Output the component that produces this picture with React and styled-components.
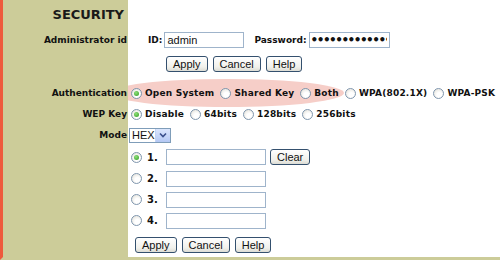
import React from "react";
import styled, { createGlobalStyle } from "styled-components";

const GlobalStyle = createGlobalStyle`
  html, body {
    margin: 0;
    padding: 0;
    background: #ffffff;
  }
  body {
    font-family: "DejaVu Sans", Verdana, sans-serif;
  }
`;

const OLIVE = "#cccc99";

const Page = styled.div`
  width: 497px;
  height: 257px;
  border-left: 3px solid #ee5a3c;
  border-bottom: 3px solid ${OLIVE};
  background: #ffffff;
  display: grid;
  grid-template-columns: 125px 1fr;
  overflow: hidden;
`;

const Label = styled.div`
  position: relative;
  z-index: 2;
  background: ${OLIVE};
  height: ${({ $h }) => $h}px;
  display: flex;
  align-items: center;
  justify-content: flex-end;
  padding-right: 1px;
  font-weight: bold;
  font-size: 9px;
  color: #111;
  white-space: nowrap;
`;

const Title = styled(Label)`
  font-size: 13px;
  padding-right: 4px;
  color: #1a1a1a;
`;

const Field = styled.div`
  position: relative;
  height: ${({ $h }) => $h}px;
  display: flex;
  align-items: ${({ $top }) => ($top ? "flex-start" : "center")};
  padding-left: ${({ $pl }) => $pl || 0}px;
  padding-top: ${({ $pt }) => $pt || 0}px;
  box-sizing: border-box;
  font-size: 9px;
  font-weight: bold;
  color: #111;
  white-space: nowrap;
`;

const Highlight = styled.div`
  position: absolute;
  left: -18px;
  top: -3px;
  width: 234px;
  height: 28px;
  border-radius: 50%;
  background: #f6cec8;
  z-index: 0;
`;

const OptionText = styled.span`
  position: relative;
  z-index: 1;
  letter-spacing: 0.2px;
  margin-right: ${({ $mr }) => $mr || 0}px;
`;

const TextBox = styled.input`
  width: ${({ $w }) => $w}px;
  height: 16px;
  box-sizing: border-box;
  border: 1px solid #9fb4cb;
  padding: 0 2px;
  margin: 0 0 0 ${({ $ml }) => $ml || 0}px;
  font-family: "Liberation Sans", Arial, sans-serif;
  font-size: 11px;
  color: #111;
  outline: none;
  background: #fff;
  &[type="password"] {
    font-family: "DejaVu Sans", sans-serif;
    font-size: 12px;
    font-weight: bold;
    letter-spacing: -1.5px;
    padding-left: 1px;
  }
`;

const ButtonRow = styled.div`
  display: flex;
  gap: 5px;
  margin-left: ${({ $ml }) => $ml}px;
`;

const Button = styled.button`
  height: 16px;
  padding: 0 6px;
  margin-left: ${({ $ml }) => $ml || 0}px;
  border: 1px solid #34506e;
  border-radius: 3px;
  background: linear-gradient(#ffffff, #f1f1ec 70%, #dcdcd4);
  font-family: "Liberation Sans", Tahoma, sans-serif;
  font-size: 11px;
  line-height: 14px;
  color: #111;
  cursor: pointer;
`;

const RadioCircle = styled.span`
  position: relative;
  z-index: 1;
  display: inline-block;
  flex: none;
  width: 11px;
  height: 11px;
  box-sizing: border-box;
  border-radius: 50%;
  border: 1px solid #7f96ae;
  background: radial-gradient(circle at 60% 65%, #ffffff 30%, #dedcd3 100%);
  margin: 0 ${({ $mr }) => ($mr != null ? $mr : 3)}px 0 3px;
  &::after {
    content: "";
    display: ${({ $checked }) => ($checked ? "block" : "none")};
    position: absolute;
    left: 2px;
    top: 2px;
    width: 5px;
    height: 5px;
    border-radius: 50%;
    background: radial-gradient(circle at 40% 35%, #8fe07a, #2f9a22);
  }
`;

const Option = ({ checked, children, last }) => (
  <>
    <RadioCircle $checked={checked} />
    <OptionText $mr={last ? 0 : 3}>{children}</OptionText>
  </>
);

const SelectBox = styled.div`
  position: relative;
  width: 42px;
  height: 15px;
  box-sizing: border-box;
  border: 1px solid #7f9db9;
  background: #fff;
  font-family: "Liberation Sans", Tahoma, sans-serif;
  font-weight: normal;
  font-size: 11px;
  color: #111;
  display: flex;
  align-items: center;
  padding-left: 2px;
  margin-left: 1px;
`;

const SelectArrow = styled.span`
  position: absolute;
  right: 0;
  top: 0;
  bottom: 0;
  width: 14px;
  background: linear-gradient(#dbe6fd, #b4c8f4);
  border-left: 1px solid #c3d3f5;
  display: flex;
  align-items: center;
  justify-content: center;
`;

const KeyNum = styled.span`
  width: 19px;
  font-size: 10px;
  font-weight: bold;
`;

const keyRows = [
  { n: "1.", h: 22, checked: true, clear: true },
  { n: "2.", h: 21 },
  { n: "3.", h: 21 },
  { n: "4.", h: 21 },
];

export default function App() {
  return (
    <>
      <GlobalStyle />
      <Page>
        <Title $h={29}>SECURITY</Title>
        <Field $h={29} />

        <Label $h={22}>Administrator id</Label>
        <Field $h={22} $pl={20}>
          <span>ID:</span>
          <TextBox $w={80} $ml={2} defaultValue="admin" />
          <span style={{ marginLeft: 10 }}>Password:</span>
          <TextBox $w={81} $ml={2} type="password" defaultValue="aaaaaaaaaaaaaaaaaaaaaa" />
        </Field>

        <Label $h={31} />
        <Field $h={31} $top $pt={5}>
          <ButtonRow $ml={38}>
            <Button>Apply</Button>
            <Button>Cancel</Button>
            <Button>Help</Button>
          </ButtonRow>
        </Field>

        <Label $h={22}>Authentication</Label>
        <Field $h={22}>
          <Highlight />
          <Option checked>Open System</Option>
          <Option>Shared Key</Option>
          <Option>Both</Option>
          <Option>WPA(802.1X)</Option>
          <Option last>WPA-PSK</Option>
        </Field>

        <Label $h={20}>WEP Key</Label>
        <Field $h={20}>
          <Option checked>Disable</Option>
          <Option>64bits</Option>
          <Option>128bits</Option>
          <Option last>256bits</Option>
        </Field>

        <Label $h={22}>Mode</Label>
        <Field $h={22}>
          <SelectBox>
            HEX
            <SelectArrow>
              <svg width="8" height="6" viewBox="0 0 8 6">
                <path d="M1 1.5 L4 4.5 L7 1.5" fill="none" stroke="#3a4f8c" strokeWidth="1.6" />
              </svg>
            </SelectArrow>
          </SelectBox>
        </Field>

        {keyRows.map((r) => (
          <React.Fragment key={r.n}>
            <Label $h={r.h} />
            <Field $h={r.h}>
              <RadioCircle $checked={r.checked} $mr={5} />
              <KeyNum>{r.n}</KeyNum>
              <TextBox $w={100} />
              {r.clear && <Button $ml={4}>Clear</Button>}
            </Field>
          </React.Fragment>
        ))}

        <Label $h={26} />
        <Field $h={26} $top $pt={6}>
          <ButtonRow $ml={7}>
            <Button>Apply</Button>
            <Button>Cancel</Button>
            <Button>Help</Button>
          </ButtonRow>
        </Field>
      </Page>
    </>
  );
}
